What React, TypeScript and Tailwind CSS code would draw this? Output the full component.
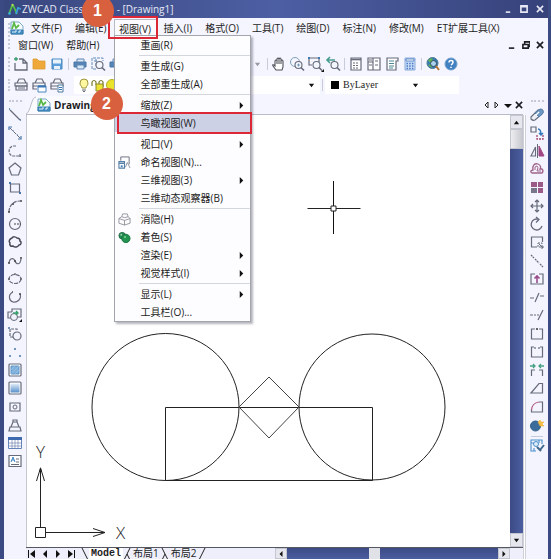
import React from 'react';

type IconProps = { children: React.ReactNode; className?: string };

function Icon({ children, className = 'h-[14px] w-[14px]' }: IconProps) {
  return (
    <svg
      viewBox="0 0 14 14"
      className={`${className} shrink-0 overflow-visible`}
      fill="none"
      stroke="#676a7a"
      aria-hidden="true"
    >
      {children}
    </svg>
  );
}

type Tool = { label: string; icon: React.ReactNode };

const drawTools: Tool[] = [
  {
    label: 'Line',
    icon: (
      <>
        <path d="M2 2l10 10" strokeWidth="1.2" />
        <path d="M1 1h1M12 12h1" stroke="#4774a8" strokeWidth="1.6" />
      </>
    ),
  },
  {
    label: 'Construction line',
    icon: (
      <>
        <path d="M2 2l10 10" strokeDasharray="4 1" />
        <path d="M1 4V1h3M10 13h3v-3M5 5h1M9 9h1" stroke="#4774a8" strokeWidth="1.2" />
      </>
    ),
  },
  {
    label: 'Polyline',
    icon: <path d="M8 2H5C0 3 0 10 4 12h9M12 10v3" strokeDasharray="3 1" strokeWidth="1.2" />,
  },
  { label: 'Polygon', icon: <path d="M7 1l6 5-2.500 7h-7L1 6z" strokeWidth="1.2" /> },
  {
    label: 'Rectangle',
    icon: (
      <>
        <path d="M2.500 3h9v8h-9z" strokeWidth="1.200" />
        <path d="M1 2h2M11 12h2" stroke="#4774a8" strokeWidth="2" />
      </>
    ),
  },
  {
    label: 'Arc',
    icon: (
      <>
        <path d="M1 13C1 7 5 2 12 2" strokeDasharray="4 1" strokeWidth="1.200" />
        <path d="M0 13h2M4 5h2M12 2h2" stroke="#444" strokeWidth="1.400" />
      </>
    ),
  },
  {
    label: 'Circle',
    icon: (
      <>
        <circle cx="7" cy="7" r="5.500" strokeWidth="1.200" />
        <path d="M6 7h7" stroke="#444" strokeDasharray="2 1" strokeWidth="1.200" />
      </>
    ),
  },
  {
    label: 'Revision cloud',
    icon: (
      <path
        d="M4 3c1-2 4-1 5 0 3 0 3 2 3 3 2 1 1 4-1 4-1 2-4 3-6 1-2 1-4-1-3-3-2-2 0-4 2-5z"
        stroke="#454754"
        strokeWidth="1.500"
      />
    ),
  },
  {
    label: 'Spline',
    icon: (
      <>
        <path d="M1 9c1-6 5-5 6-2s5 5 6-2" strokeWidth="1.200" />
        <path d="M0 9h2M6 7h2M12 4h2" stroke="#444" strokeWidth="1.400" />
      </>
    ),
  },
  {
    label: 'Ellipse',
    icon: (
      <>
        <ellipse cx="7" cy="7" rx="6" ry="4.500" strokeDasharray="4 1" strokeWidth="1.200" />
        <path d="M0 7h2M12 7h2M6 2h2" stroke="#444" strokeWidth="1.200" />
      </>
    ),
  },
  {
    label: 'Ellipse arc',
    icon: (
      <>
        <path d="M4 2.500C0 5 1 11 5 12s9-3 7-8" strokeWidth="1.200" />
        <path d="M4 2h1M11 4h2" stroke="#444" strokeWidth="1.400" />
      </>
    ),
  },
  {
    label: 'Insert block',
    icon: (
      <>
        <path d="M4 4V1h9v8H9M4 4H0v6h3" strokeWidth="1.200" />
        <circle cx="6" cy="9" r="3.500" fill="#f0f2fb" />
        <path d="M5 5h5M8 3l2 2-2 2" stroke="#36a06c" strokeWidth="1.400" />
        <path d="M14 11v3h-3z" fill="#111" stroke="none" />
      </>
    ),
  },
  {
    label: 'Make block',
    icon: (
      <>
        <path d="M5 10H2V2h7v2" strokeDasharray="3 1" strokeWidth="1.200" />
        <circle cx="9" cy="9" r="4" strokeWidth="1.200" />
        <path d="M0 1h2" stroke="#4774a8" strokeWidth="1.600" />
      </>
    ),
  },
  {
    label: 'Point',
    icon: <path d="M6 4h2M1 11h2M11 11h2" stroke="#4774a8" strokeWidth="1.600" />,
  },
  {
    label: 'Hatch',
    icon: (
      <>
        <rect x="1" y="1" width="12" height="12" rx="1" fill="#fff" strokeWidth="1.200" />
        <path d="M3 3h8v8H3z" fill="#7fb0db" stroke="#5a92c6" />
        <path d="M3 7l4-4M3 11l8-8M7 11l4-4" stroke="#9cc4e6" strokeWidth=".7" />
      </>
    ),
  },
  {
    label: 'Gradient',
    icon: (
      <>
        <defs>
          <linearGradient id="fade" x1="0" y1="0" x2="0" y2="1">
            <stop stopColor="#e3eefa" />
            <stop offset="1" stopColor="#5790cb" />
          </linearGradient>
        </defs>
        <rect x="1" y="1" width="12" height="12" rx="1" fill="#fff" strokeWidth="1.200" />
        <path d="M2.500 2.500h9v9h-9z" fill="url(#fade)" stroke="none" />
      </>
    ),
  },
  {
    label: 'Region',
    icon: (
      <>
        <path d="M2 3h10v8H2z" strokeWidth="1.200" />
        <circle cx="7" cy="7" r="2" />
      </>
    ),
  },
  {
    label: 'Wipeout',
    icon: <path d="M5 2h4v2l2 5H3l2-5zM2 9h10l1 4H1zM5 4h4" strokeWidth="1.200" />,
  },
  {
    label: 'Table',
    icon: (
      <>
        <path d="M.5 1.500h13v11H.5z" fill="#fff" stroke="#6484b8" />
        <path d="M0 1h14v3H0z" fill="#3e69ae" stroke="none" />
        <path d="M4 4v8M7 4v8M10 4v8M1 7h12M1 10h12" stroke="#7e93b8" strokeWidth=".8" />
      </>
    ),
  },
  {
    label: 'Multiline text',
    icon: (
      <>
        <path d="M1 1.500h12v11H1z" fill="#fff" strokeWidth="1.200" />
        <path d="M3 8l2-5 2 5M4 6h2" stroke="#3f83c5" />
        <path d="M8 5h3M8 8h3M3 10.500h8" strokeWidth="1" />
      </>
    ),
  },
];

const modifyTools: Tool[] = [
  {
    label: 'Erase',
    icon: (
      <>
        <path d="M1 9l7-7q2-1 4 0 2 2 0 4l-7 6q-2 1-4-1z" fill="#edf0f6" strokeWidth="1.100" />
        <path d="M5 5l5-4q4 0 3 4L9 9z" fill="#6c96c3" stroke="#577ea8" />
        <path d="M6 7l3-3" stroke="#fff" strokeWidth="1.200" />
      </>
    ),
  },
  {
    label: 'Copy',
    icon: (
      <>
        <path d="M1 1h5v5H1z" strokeWidth="1.200" />
        <path d="M7 9v4h6V9" strokeDasharray="2 1" stroke="#a4476e" strokeWidth="1.300" />
        <path d="M8 3c3 0 3 3 3 6M9 7l2 2 2-2" stroke="#3578bb" strokeWidth="1.500" />
      </>
    ),
  },
  {
    label: 'Mirror',
    icon: (
      <>
        <path d="M5.500 3v9H1z" strokeWidth="1.100" />
        <path d="M9 2v10h5z" fill="#a04683" stroke="#a04683" />
        <path d="M7.500 0v14" />
      </>
    ),
  },
  {
    label: 'Offset',
    icon: (
      <>
        <path d="M3 8C2 3 5 1 8 2s3 4 2 5h2q2 2 0 4H2q-3-2 1-3z" stroke="#a0648b" strokeWidth="1.300" />
        <path d="M5 8q-1-4 2-4 2 1 0 5h4" stroke="#a0648b" />
      </>
    ),
  },
  {
    label: 'Array',
    icon: (
      <>
        <path d="M1 1h6v5H1zM8 1h5v5H8zM8 7h5v5H8z" fill="#9a5b88" stroke="none" />
        <path d="M1 7h6v5H1z" fill="#77778b" stroke="none" />
      </>
    ),
  },
  {
    label: 'Move',
    icon: (
      <path
        d="M7 1v12M1 7h12M5 3l2-2 2 2M5 11l2 2 2-2M3 5L1 7l2 2M11 5l2 2-2 2"
        strokeWidth="1.200"
      />
    ),
  },
  {
    label: 'Rotate',
    icon: <path d="M12 9A5.500 5.500 0 1 1 9 2.500M6 0l3 2.500-3 3" strokeWidth="1.300" />,
  },
  {
    label: 'Scale',
    icon: (
      <>
        <path d="M7 12H1.500V2h11v5" strokeWidth="1.200" />
        <path d="M8 8h4v4H8z" strokeDasharray="2 1" />
        <path d="M9 9l4 4M11 13h2v-2" />
      </>
    ),
  },
  {
    label: 'Stretch',
    icon: <path d="M1 1l3 3M5 5l4 4M10 10l3 3" strokeDasharray="2 .6" strokeWidth="1.300" />,
  },
  {
    label: 'Lengthen',
    icon: (
      <>
        <path d="M5 2H1v10h12V2H9" strokeWidth="1.200" />
        <path d="M7 11V4M4.500 6.500L7 4l2.500 2.500" stroke="#9a4b8a" strokeWidth="1.600" />
      </>
    ),
  },
  {
    label: 'Trim',
    icon: <path d="M0 8h4M10 6h4M5 12l4-9" strokeWidth="1.200" />,
  },
  {
    label: 'Extend',
    icon: <path d="M0 7h3M4 7h2M7 7h2M8 12l5-10" strokeWidth="1.200" />,
  },
  {
    label: 'Break at point',
    icon: (
      <>
        <path d="M5 2H1.500v10h11V2H9" strokeWidth="1.200" />
        <path d="M6 2h2" stroke="#333" strokeWidth="1.600" />
      </>
    ),
  },
  {
    label: 'Break',
    icon: <path d="M4 2H1.500v10h11V2H10M5 2v2M9 2v2" strokeWidth="1.200" />,
  },
  {
    label: 'Join',
    icon: (
      <>
        <path d="M1.500 13V7H5M12.500 13V7H9" strokeWidth="1.200" />
        <path d="M0 3h5M3 1l2 2-2 2M14 3H9M11 1L9 3l2 2" stroke="#45a080" strokeWidth="1.300" />
      </>
    ),
  },
  { label: 'Chamfer', icon: <path d="M1 12L9 2.500h3.500V12z" strokeWidth="1.200" /> },
  {
    label: 'Fillet',
    icon: (
      <>
        <path d="M9 2h3.500v10H1.500V9" strokeWidth="1.200" />
        <path d="M1.500 10Q2 3 9 2" stroke="#b5648c" strokeWidth="1.200" />
      </>
    ),
  },
  {
    label: 'Explode',
    icon: (
      <>
        <circle cx="5.500" cy="8" r="5" fill="#3c6c9c" stroke="#35618d" />
        <path d="M8 4l2-2 1 2 3 0-2 2 2 2-4 0z" fill="#f5bf46" stroke="#f0b13a" strokeWidth=".6" />
      </>
    ),
  },
];

const matchTool: Tool = {
  label: 'Match properties',
  icon: (
    <>
      <path d="M6 12H1V1h11v4M1 4h3M9 1v3M4 9v3" stroke="#4b8fca" strokeWidth="1.100" />
      <circle cx="6" cy="5" r="2.500" fill="#dcecf8" stroke="#4b8fca" />
      <path d="M7 8l3 3 4-5M8 9l3 3" stroke="#42698c" strokeWidth="2" />
    </>
  ),
};

const lens = (
  <>
    <circle cx="8.500" cy="8" r="3.500" fill="#f3f6fc" strokeWidth="1.100" />
    <path d="M11 10.500l3 3" strokeWidth="1.600" />
  </>
);

const fileTools: Tool[] = [
  {
    label: 'New',
    icon: (
      <>
        <path d="M5 2h4l4 4v7H1V6M9 2v4h4" strokeWidth="1.300" />
        <path d="M2 0v4M0 2h4" stroke="#3d9a6c" strokeWidth="1.300" />
      </>
    ),
  },
  {
    label: 'Open',
    icon: <path d="M1 2h4l2 2h6v8H1z" fill="#efa93a" stroke="#dd9c33" strokeWidth=".8" />,
  },
  {
    label: 'Save',
    icon: (
      <>
        <path d="M2 2h10v10H2z" fill="#5c9fd9" stroke="#4887c2" />
        <path d="M3 2.500h8v4H3zM4 9h6v3H4z" fill="#e8f2fb" stroke="none" />
      </>
    ),
  },
];

const printTools: Tool[] = [
  {
    label: 'Print',
    icon: (
      <>
        <path d="M1 5h12v5H1z" fill="#5785b7" stroke="#4b76a5" />
        <path d="M4 2h7v3H4zM4 8h7v4H4z" fill="#dbe8f5" stroke="#5f87b2" />
      </>
    ),
  },
  {
    label: 'Print preview',
    icon: (
      <>
        <path d="M5 12H1V1h11v3M3 4h4M5 2v7" stroke="#628db8" strokeDasharray="3 1" />
        {lens}
      </>
    ),
  },
  {
    label: 'Publish',
    icon: (
      <>
        <path d="M1 5h12v5H1z" fill="#5785b7" stroke="#4b76a5" />
        <path d="M4 2h7v3H4z" fill="#dbe8f5" stroke="#5f87b2" />
      </>
    ),
  },
];

const zoomTools: Tool[] = [
  {
    label: 'Pan',
    icon: (
      <path
        d="M4 13L1 9q-1-2 1-1l1 1V4q1-2 2 0v3V2q1-2 2 0v5V2q1-2 2 0v5V4q1-2 2 0v6l-1 3z"
        fill="#fff"
        stroke="#50515a"
        strokeWidth="1.100"
      />
    ),
  },
  {
    label: 'Zoom realtime',
    icon: (
      <>
        <circle cx="5" cy="5" r="4.500" stroke="#7f9fbc" />
        {lens}
        <path d="M7 8h3M8.500 6.500v3" stroke="#5f88ae" strokeWidth=".8" />
      </>
    ),
  },
  {
    label: 'Zoom window',
    icon: (
      <>
        <path d="M4 8H1V1h10v4" strokeWidth="1.200" />
        <path d="M0 1h2M10 1h2" stroke="#3f79b1" strokeWidth="1.800" />
        {lens}
        <path d="M16 12v3h-3z" fill="#111" stroke="none" />
      </>
    ),
  },
  {
    label: 'Zoom previous',
    icon: (
      <>
        <path d="M9 3H1M4 0L1 3l3 3" stroke="#489d90" strokeWidth="1.600" />
        {lens}
      </>
    ),
  },
];

const paletteTools: Tool[] = [
  {
    label: 'Properties',
    icon: (
      <>
        <path d="M2 1h10v12H2z" fill="#fff" strokeWidth="1.200" />
        <path d="M2 2.500h10" strokeWidth="1.600" />
        <path d="M4 6h6M4 8.500h6M4 11h6" strokeDasharray="2 1" />
      </>
    ),
  },
  {
    label: 'Design center',
    icon: (
      <>
        <path d="M1 1h12v12H1zM6 1v12M1 5h5" fill="#fff" strokeWidth="1.200" />
        <path d="M2 3h3M8 4h3M8 8h3M2 8h3" strokeWidth="1" />
      </>
    ),
  },
  {
    label: 'Tool palettes',
    icon: (
      <>
        <path d="M2 1h11v3h-2v9H2z" fill="#fff" strokeWidth="1.200" />
        <path d="M4 4h5M4 6.500h5M4 9h5M4 11h4" stroke="#4d8594" />
      </>
    ),
  },
  {
    label: 'Calculator',
    icon: (
      <>
        <path d="M2 1h10v12H2z" fill="#c9dcf5" stroke="#8aabdb" />
        <path d="M3 2h8v2H3z" fill="#fff" stroke="#4477bd" strokeWidth=".8" />
        <path
          d="M3.500 6.500h7M3.500 9h7M3.500 11.500h7"
          stroke="#4c7bc6"
          strokeWidth="1.400"
          strokeDasharray="1.500 1.200"
        />
      </>
    ),
  },
];

const helpTools: Tool[] = [
  {
    label: 'Search online',
    icon: (
      <>
        <circle cx="6.500" cy="6" r="5.500" fill="#327db6" stroke="#4d7690" />
        <path d="M2 3l4-2 1 3-3 2zM2 8l3-1 1 4z" fill="#63b552" stroke="none" />
        <circle cx="7.500" cy="6.500" r="3" fill="#a9d2ee" stroke="#33485c" />
        <path d="M10 9l3 4" stroke="#b87434" strokeWidth="2" />
      </>
    ),
  },
  {
    label: 'Help',
    icon: (
      <>
        <circle cx="7" cy="7" r="6" fill="#4382c2" stroke="#6f9fcd" />
        <path d="M5 5.500q0-2 2-2t2 1.700Q9 6.500 7 8M7 9.700v1.300" stroke="#fff" strokeWidth="1.500" />
      </>
    ),
  },
];

const sheet = <path d="M3 5l2-4h5l2 4M1 5h12v3H1z" fill="#f7f8fc" strokeWidth="1.200" />;

const layerTools: Tool[] = [
  {
    label: 'Layer manager',
    icon: (
      <>
        {sheet}
        <path d="M2 8h11v4H2zM4 10h7" strokeWidth="1.200" />
      </>
    ),
  },
  {
    label: 'Layer states',
    icon: (
      <>
        {sheet}
        <path d="M1 8v3h4" strokeWidth="1.200" />
        <path d="M6 8h8v6H6z" fill="#fff" stroke="#4a88be" />
        <path d="M6 8.500h8" stroke="#3876b4" strokeWidth="2" />
      </>
    ),
  },
  {
    label: 'Layer previous',
    icon: (
      <>
        {sheet}
        <path d="M1 8v3h6" strokeWidth="1.200" />
        <path d="M8 7h5v7H8z" fill="#fff" stroke="#4b7a9e" />
        <path d="M9 9.500h3M9 11.500h3" stroke="#3876b4" />
      </>
    ),
  },
];

function ToolButton({ tool }: { tool: Tool }) {
  return (
    <button type="button" aria-label={tool.label} className="flex w-[18px] justify-center">
      <Icon>{tool.icon}</Icon>
    </button>
  );
}

function ToolGroup({ tools }: { tools: Tool[] }) {
  return (
    <>
      {tools.map((tool) => (
        <ToolButton key={tool.label} tool={tool} />
      ))}
    </>
  );
}

function Divider() {
  return <span className="mx-[2px] h-3 w-px shrink-0 bg-[#c9cbd8]" />;
}

function Grip() {
  return <span className="my-1 w-0 self-stretch border-l-2 border-dotted border-[#c6c9d8]" />;
}

function DrawingIcon() {
  return (
    <Icon>
      <path d="M1 1h8l4 4v8H1z" fill="#f5fbfd" stroke="#7ba9c4" />
      <path d="M2 8l2-6 2 5 3-3" stroke="#59b944" strokeWidth="1.800" />
      <path d="M1 9h12v4H1z" fill="#3c8bc2" stroke="#3d7eae" />
      <path d="M3 12v-2M5 12v-2h2M9 12v-2h2" stroke="#e7f4fb" />
    </Icon>
  );
}

function Arrow({ d, className = 'h-2 w-2' }: { d: string; className?: string }) {
  return (
    <svg viewBox="0 0 8 8" className={`${className} shrink-0`} fill="#111" aria-hidden="true">
      <path d={d} />
    </svg>
  );
}

const RIGHT = 'M2 0l4 4-4 4z';
const LEFT = 'M6 0L2 4l4 4z';
const UP = 'M1 6l3-4 3 4z';
const DOWN = 'M1 2h6L4 6z';

type Entry = { text: string; sub?: boolean; icon?: React.ReactNode };

const viewMenu: Entry[][] = [
  [{ text: '重画(R)' }],
  [{ text: '重生成(G)' }, { text: '全部重生成(A)' }],
  [{ text: '缩放(Z)', sub: true }, { text: '鸟瞰视图(W)' }],
  [
    { text: '视口(V)', sub: true },
    {
      text: '命名视图(N)...',
      icon: (
        <>
          <path d="M3 5V1h9v8" />
          <path d="M1 6h6v7H1zM1 8h6" stroke="#5680a8" strokeWidth="1.200" />
          <path d="M3 10h2v2H3z" fill="#4682b8" stroke="none" />
          <path d="M8 12l2-5 3 6" stroke="#8a9299" />
        </>
      ),
    },
    { text: '三维视图(3)', sub: true },
    { text: '三维动态观察器(B)' },
  ],
  [
    {
      text: '消隐(H)',
      icon: (
        <path
          d="M5 1h5l1 3 2 2v5l-6 2-6-2V6l3-2zM4 4l3 1 4-1M1 6l6 2 6-2M7 8v5"
          stroke="#858892"
          strokeWidth=".9"
        />
      ),
    },
    {
      text: '着色(S)',
      icon: (
        <>
          <circle cx="4.500" cy="5" r="3.500" fill="#2a8a55" stroke="#236a44" />
          <circle cx="8.500" cy="8" r="4.500" fill="#239350" stroke="#1c7240" />
          <circle cx="3.500" cy="4" r="1" fill="#93d6aa" stroke="none" />
          <circle cx="7.500" cy="6.500" r="1.200" fill="#74cf92" stroke="none" />
        </>
      ),
    },
    { text: '渲染(E)', sub: true },
    { text: '视觉样式(I)', sub: true },
  ],
  [{ text: '显示(L)', sub: true }, { text: '工具栏(O)...' }],
];

function Badge({ n, className }: { n: number; className: string }) {
  return (
    <span
      className={`absolute z-30 flex h-8 w-8 items-center justify-center rounded-full bg-[#d9603f] font-['Liberation_Sans'] text-base font-bold text-white ${className}`}
    >
      {n}
    </span>
  );
}

function ViewMenu() {
  return (
    <div
      role="menu"
      className="absolute top-[16px] left-0 z-20 w-[137px] border border-[#a3a5ad] bg-[#fdfdff] shadow-[2px_2px_2px_rgba(90,90,110,0.45)]"
    >
      {viewMenu.map((group, i) => (
        <div key={i}>
          {i > 0 && <div className="my-px ml-6 h-px bg-[#d5d7df]" />}
          {group.map((entry) => {
            const active = entry.text === '鸟瞰视图(W)';
            return (
              <div key={entry.text} className="relative">
                <button
                  type="button"
                  role="menuitem"
                  className={`flex h-[18px] w-full items-center pr-1 text-left ${
                    active ? 'bg-[#cdd1e6]' : ''
                  }`}
                >
                  <span className="flex w-[26px] pl-[3px]">
                    {entry.icon && <Icon className="h-[13px] w-[13px]">{entry.icon}</Icon>}
                  </span>
                  <span className="flex-1 whitespace-nowrap">{entry.text}</span>
                  {entry.sub && <Arrow d={RIGHT} className="mr-px h-[7px] w-[7px]" />}
                </button>
                {active && (
                  <>
                    <span className="pointer-events-none absolute -inset-y-[2px] -right-[2px] left-[2px] border-2 border-[#dc2836]" />
                    <Badge n={2} className="-top-[26px] -left-6" />
                  </>
                )}
              </div>
            );
          })}
        </div>
      ))}
    </div>
  );
}

function MenuButton({ children }: { children: React.ReactNode }) {
  return (
    <button type="button" className="px-[6px] whitespace-nowrap">
      {children}
    </button>
  );
}

function MenuBar() {
  return (
    <nav className="flex h-[35px] pt-px pl-1">
      <Grip />
      <div className="flex-1">
        <div className="flex h-[18px] items-center gap-px">
          <DrawingIcon />
          <MenuButton>文件(F)</MenuButton>
          <MenuButton>编辑(E)</MenuButton>
          <div className="relative h-[18px]">
            <button
              type="button"
              aria-expanded="true"
              className="h-full w-[43px] border border-b-0 border-[#b9bbc4] bg-[#fbfbff] whitespace-nowrap"
            >
              视图(V)
            </button>
            <span className="pointer-events-none absolute -top-[3px] -right-px -bottom-[2px] -left-[6px] z-30 border-2 border-[#dc2836]" />
            <Badge n={1} className="-top-6 -left-8" />
            <ViewMenu />
          </div>
          <MenuButton>插入(I)</MenuButton>
          <MenuButton>格式(O)</MenuButton>
          <MenuButton>工具(T)</MenuButton>
          <MenuButton>绘图(D)</MenuButton>
          <MenuButton>标注(N)</MenuButton>
          <MenuButton>修改(M)</MenuButton>
          <MenuButton>ET扩展工具(X)</MenuButton>
        </div>
        <div className="flex h-4 items-center gap-px pl-[2px]">
          <MenuButton>窗口(W)</MenuButton>
          <MenuButton>帮助(H)</MenuButton>
          <div className="ml-auto flex gap-[6px] pr-1">
            <WindowButton label="Minimize drawing" d="M1 8h6" />
            <WindowButton label="Restore drawing" d="M3 3V1h6v5H7M1 4h6v4H1zM1 4h6" />
            <WindowButton label="Close drawing" d="M1 1l7 7M8 1L1 8" />
          </div>
        </div>
      </div>
    </nav>
  );
}

function WindowButton({ label, d }: { label: string; d: string }) {
  return (
    <button type="button" aria-label={label} className="flex w-2">
      <svg
        viewBox="0 0 9 9"
        className="h-2 w-2"
        fill="none"
        stroke="currentColor"
        strokeWidth="1.800"
        aria-hidden="true"
      >
        <path d={d} />
      </svg>
    </button>
  );
}

function TitleBar() {
  return (
    <header className="flex h-[18px] items-center bg-linear-to-r from-[#39477f] via-[#4d5fa3] to-[#36427a] px-1 text-[10px] text-[#e6e9f5]">
      <svg viewBox="0 0 14 14" className="h-[14px] w-[14px]" fill="none" aria-hidden="true">
        <path d="M1 12l3-8M5 3l4 9" stroke="#55bd45" strokeWidth="1.800" />
        <path d="M8 12l2-6 3 1" stroke="#39a0dc" strokeWidth="1.800" />
        <circle cx="4.500" cy="3" r="1.200" fill="#a8e05c" />
        <circle cx="1.500" cy="11.500" r="1.200" fill="#3cb2e8" />
      </svg>
      <h1 className="whitespace-pre">ZWCAD Classic</h1>
      <span className="ml-[26px]">- [Drawing1]</span>
      <div className="ml-auto flex gap-2">
        <WindowButton label="Minimize" d="M2 8h5" />
        <WindowButton label="Maximize" d="M1 1h7v7H1zM1 2h7" />
        <WindowButton label="Close" d="M1 1l7 7M8 1L1 8" />
      </div>
    </header>
  );
}

function StandardBar() {
  return (
    <div className="flex h-[22px] items-center pl-1">
      <Grip />
      <div className="flex items-center pl-[2px]">
        <ToolGroup tools={fileTools} />
        <Divider />
        <ToolGroup tools={printTools} />
        <button type="button" aria-label="Redo list" className="ml-[129px] opacity-40">
          <Arrow d={DOWN} className="h-[7px] w-[7px]" />
        </button>
        <span className="w-1" />
        <Divider />
        <ToolGroup tools={zoomTools} />
        <Divider />
        <ToolGroup tools={paletteTools} />
        <Divider />
        <ToolGroup tools={helpTools} />
      </div>
    </div>
  );
}

function LayerBar() {
  return (
    <div className="flex h-5 items-center pl-1">
      <Grip />
      <div className="flex items-center pl-[2px]">
        <ToolGroup tools={layerTools} />
        <button
          type="button"
          aria-label="Layer"
          className="ml-2 flex h-[18px] w-[246px] items-center bg-white pl-[3px]"
        >
          <Icon>
            <path
              d="M5 10c0-2-2-2-2-5a4 4 0 0 1 8 0c0 3-2 3-2 5z"
              fill="#fff6a0"
              stroke="#9c9440"
            />
            <path d="M5 12h4M6 13.500h2" />
          </Icon>
          <Icon>
            <path d="M1 8V4q2-3 4 0v3M8 7V4q2-3 4 0v5" stroke="#77772b" strokeWidth="1.200" />
            <path d="M5 6h7v7H5z" fill="#ece332" stroke="#8d882b" />
          </Icon>
          <Icon>
            <circle cx="7" cy="7" r="5.500" fill="#e9e32a" stroke="#b5ad2b" />
          </Icon>
          <Arrow d={DOWN} className="mr-[5px] ml-auto h-[7px] w-[7px]" />
        </button>
        <Divider />
        <button
          type="button"
          aria-label="Color"
          className="flex h-[18px] w-[98px] items-center bg-white pl-[6px] font-['Liberation_Serif'] text-[10px] leading-none"
        >
          <span className="mr-1 h-2 w-2 bg-black" />
          ByLayer
          <Arrow d={DOWN} className="mr-1 ml-auto h-[7px] w-[7px]" />
        </button>
        <span className="h-[18px] w-9 bg-white" />
      </div>
    </div>
  );
}

function ToolColumn({ children }: { children: React.ReactNode }) {
  return (
    <aside className="flex w-[22px] shrink-0 flex-col items-center bg-[#f3f4fe] pt-1">
      <span className="mb-1 w-[13px] border-t-2 border-dotted border-[#c6c9d8]" />
      {children}
    </aside>
  );
}

// tools are laid out in fours, with a hairline of extra space between the sets
function ToolStack({ tools }: { tools: Tool[] }) {
  const sets: Tool[][] = [];
  for (let i = 0; i < tools.length; i += 4) sets.push(tools.slice(i, i + 4));
  return (
    <div className="flex flex-col gap-px">
      {sets.map((set) => (
        <div key={set[0].label}>
          {set.map((tool) => (
            <div key={tool.label} className="flex h-[18px] items-center">
              <ToolButton tool={tool} />
            </div>
          ))}
        </div>
      ))}
    </div>
  );
}

function TabRow() {
  return (
    <div className="flex h-[19px] shrink-0 items-center border-b border-[#b9bbc8]">
      <svg viewBox="0 0 10 18" className="h-[18px] w-[10px] self-end" aria-hidden="true">
        <path d="M0 18C5 16 5 1 10 1v17z" fill="#fbfbff" />
        <path d="M0 18C5 16 5 1 10 1" fill="none" stroke="#b9bbc8" />
      </svg>
      <button
        type="button"
        className="flex h-full items-center gap-[3px] border-r border-[#b9bbc8] bg-[#fbfbff] px-px text-[10px] font-bold"
      >
        <DrawingIcon />
        Drawing1
      </button>
      <div className="ml-auto flex items-center gap-[3px]">
        <button type="button" aria-label="Previous tab">
          <svg viewBox="0 0 8 8" className="h-2 w-2" fill="none" stroke="#222" aria-hidden="true">
            <path d="M6 1L3 4l3 3z" />
          </svg>
        </button>
        <button type="button" aria-label="Next tab">
          <svg viewBox="0 0 8 8" className="h-2 w-2" fill="none" stroke="#222" aria-hidden="true">
            <path d="M2 1l3 3-3 3z" />
          </svg>
        </button>
        <button type="button" aria-label="Tab list">
          <Arrow d="M0 3h8L4 7z" />
        </button>
        <WindowButton label="Close tab" d="M1 1l7 7M8 1L1 8" />
      </div>
    </div>
  );
}

function Drawing() {
  return (
    <svg
      viewBox="27 115 483 432"
      preserveAspectRatio="xMinYMin meet"
      className="min-w-0 flex-1 bg-white"
      fill="none"
      stroke="#222"
    >
      <circle cx="165.500" cy="407" r="73.500" />
      <circle cx="372" cy="407" r="73" />
      <path d="M165.500 407.500h207v73h-207z" />
      <path d="M269 377l30 30-30 31-30-31z" stroke="#444" />
      <path d="M333.500 181v53" stroke="#111" />
      <path d="M307.500 208.500h53" />
      <path d="M331 206h5v5h-5z" fill="#fff" stroke="#222" />
      <path d="M35.500 527.500h10v10h-10z" />
      <path d="M40.500 527v-58M36.500 481l4-13 4 13M46 532.500h59M93 528.500l12 4-12 4" />
      <path d="M39 472l1.500-5 1.500 5z" fill="#222" stroke="none" />
      <text
        x="36"
        y="458"
        fontSize="17"
        fill="#222"
        stroke="none"
        className="font-['Open_Sans'] font-light"
      >
        Y
      </text>
      <text
        x="116"
        y="539"
        fontSize="17"
        fill="#222"
        stroke="none"
        className="font-['Open_Sans'] font-light"
      >
        X
      </text>
    </svg>
  );
}

const scrollButton =
  'flex shrink-0 items-center justify-center border border-[#c4c6cf] bg-[#e6e7ee]';

function VerticalScroll() {
  return (
    <div className="flex w-[13px] shrink-0 flex-col bg-linear-to-r from-[#3c4b86] to-[#4c5ea0]">
      <button type="button" aria-label="Scroll up" className={`${scrollButton} h-[14px]`}>
        <Arrow d={UP} className="h-[7px] w-[7px]" />
      </button>
      <div className="h-5 border border-[#c4c6cf] bg-linear-to-r from-[#ededf1] to-[#c9cad0]" />
      <button type="button" aria-label="Scroll down" className={`${scrollButton} mt-auto h-[14px]`}>
        <Arrow d={DOWN} className="h-[7px] w-[7px]" />
      </button>
    </div>
  );
}

function Slash({ d }: { d: string }) {
  return (
    <svg
      viewBox="0 0 8 12"
      className="h-3 w-2 shrink-0"
      fill="none"
      stroke="#222"
      aria-hidden="true"
    >
      <path d={d} />
    </svg>
  );
}

function LayoutBar() {
  return (
    <footer className="flex h-3 shrink-0 items-center border-t border-[#555862] bg-[#eeeffa] text-[10px] leading-none">
      <div className="flex items-center gap-[5px] pl-[2px]">
        <button type="button" aria-label="First layout">
          <Arrow d="M0 0h1v8H0zM7 0L2 4l5 4z" />
        </button>
        <button type="button" aria-label="Previous layout">
          <Arrow d={LEFT} />
        </button>
        <button type="button" aria-label="Next layout">
          <Arrow d={RIGHT} />
        </button>
        <button type="button" aria-label="Last layout">
          <Arrow d="M7 0h1v8H7zM1 0l5 4-5 4z" />
        </button>
      </div>
      <div className="ml-[6px] flex items-center">
        <Slash d="M1 0l6 12" />
        <button
          type="button"
          className="bg-white px-[2px] font-['Liberation_Mono'] text-[10px] leading-[11px] font-bold"
        >
          Model
        </button>
        <Slash d="M7 0L1 12M4 6l3 6" />
        <button type="button" className="px-[2px] leading-[11px] whitespace-nowrap">
          布局1
        </button>
        <Slash d="M1 0l6 12M4 6l-3 6" />
        <button type="button" className="px-[2px] leading-[11px] whitespace-nowrap">
          布局2
        </button>
        <Slash d="M7 0L1 12" />
      </div>
      <div className="ml-auto flex h-full w-[235px] bg-linear-to-b from-[#3c4b86] to-[#4c5ea0]">
        <button type="button" aria-label="Scroll left" className={`${scrollButton} w-3`}>
          <Arrow d={LEFT} className="h-[6px] w-[6px]" />
        </button>
        <span className="flex-[82]" />
        <span className="w-[11px] bg-[#e1e2e8]" />
        <span className="flex-[117]" />
        <button type="button" aria-label="Scroll right" className={`${scrollButton} w-3`}>
          <Arrow d={RIGHT} className="h-[6px] w-[6px]" />
        </button>
      </div>
      <span className="w-[13px] shrink-0" />
    </footer>
  );
}

export default function App() {
  return (
    <div className="min-h-screen overflow-hidden bg-white pr-[3px] font-['Open_Sans','Noto_Sans_CJK_SC',sans-serif] text-[10px] leading-[14px] text-[#1c1c22]">
      <div className="flex min-h-screen flex-col border-r-[3px] border-l-4 border-[#3c4a83] bg-[#f4f5fe]">
        <TitleBar />
        <MenuBar />
        <StandardBar />
        <LayerBar />
        <main className="mt-px flex flex-1">
          <ToolColumn>
            <ToolStack tools={drawTools} />
          </ToolColumn>
          <section className="flex min-w-0 flex-1 flex-col">
            <TabRow />
            <div className="flex min-h-0 flex-1 border-l border-[#c5c7d2]">
              <Drawing />
              <VerticalScroll />
            </div>
            <LayoutBar />
          </section>
          <div className="mt-[19px] w-[3px] border-x border-[#cfd0d8] bg-white" />
          <ToolColumn>
            <ToolStack tools={modifyTools} />
            <hr className="my-[2px] w-3 border-[#c6c9d8]" />
            <ToolButton tool={matchTool} />
          </ToolColumn>
        </main>
      </div>
    </div>
  );
}
